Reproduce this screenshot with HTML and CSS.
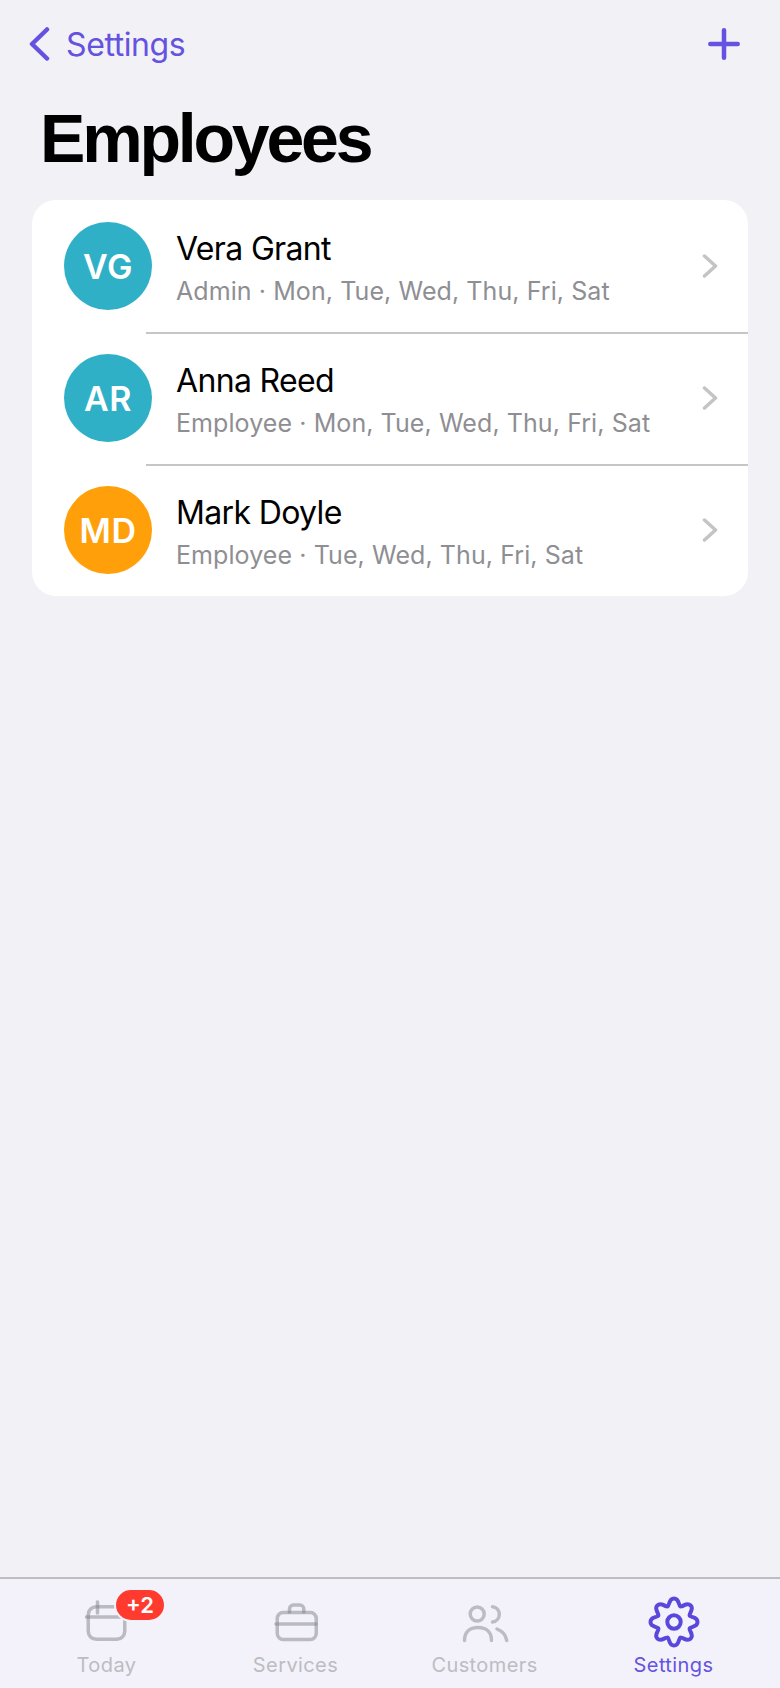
FILE: index.html
```html
<!DOCTYPE html>
<html lang="en">
<head>
    <meta charset="UTF-8">
    <meta name="viewport" content="width=device-width, initial-scale=1.0">
    <title>Employees</title>
    <link rel="stylesheet" href="styles.css">
</head>
<body>
    <div class="screen">
        <header class="navbar">
            <a class="back" href="#">
                <svg class="back-icon" width="22" height="34" viewBox="0 0 22 34"><path d="M19 2.500 4 17l15 14.500"/></svg>
                <span>Settings</span>
            </a>
            <svg class="add-icon" width="32" height="32" viewBox="0 0 32 32"><path d="M16 2.300v27.400M2.300 16h27.400"/></svg>
        </header>

        <h1 class="title">Employees</h1>

        <main class="list">
            <div class="row">
                <div class="avatar teal">VG</div>
                <div class="row-body">
                    <div class="row-text">
                        <div class="name">Vera Grant</div>
                        <div class="meta">Admin · Mon, Tue, Wed, Thu, Fri, Sat</div>
                    </div>
                    <svg class="chevron" width="16" height="24" viewBox="0 0 16 24"><path d="m2.500 2 11 10-11 10"/></svg>
                </div>
            </div>
            <div class="row">
                <div class="avatar teal">AR</div>
                <div class="row-body">
                    <div class="row-text">
                        <div class="name">Anna Reed</div>
                        <div class="meta">Employee · Mon, Tue, Wed, Thu, Fri, Sat</div>
                    </div>
                    <svg class="chevron" width="16" height="24" viewBox="0 0 16 24"><path d="m2.500 2 11 10-11 10"/></svg>
                </div>
            </div>
            <div class="row">
                <div class="avatar orange">MD</div>
                <div class="row-body">
                    <div class="row-text">
                        <div class="name">Mark Doyle</div>
                        <div class="meta">Employee · Tue, Wed, Thu, Fri, Sat</div>
                    </div>
                    <svg class="chevron" width="16" height="24" viewBox="0 0 16 24"><path d="m2.500 2 11 10-11 10"/></svg>
                </div>
            </div>
        </main>

        <nav class="tabbar">
            <a class="tab" href="#">
                <span class="tab-icon">
                    <svg class="line-icon" width="52" height="52" viewBox="0 0 52 52">
                        <rect x="7.250" y="10.750" width="36.500" height="32.500" rx="8"/>
                        <path d="M5.500 21h38"/>
                        <path d="M16.500 6v11"/>
                    </svg>
                    <span class="badge">+2</span>
                </span>
                <span class="tab-label">Today</span>
            </a>
            <a class="tab" href="#">
                <span class="tab-icon">
                    <svg class="line-icon" width="52" height="52" viewBox="0 0 52 52">
                        <rect x="7.250" y="16.500" width="39" height="27" rx="6"/>
                        <path d="M6 28h40"/>
                        <path d="M19.500 16v-3a4 4 0 0 1 4-4h6.300a4 4 0 0 1 4 4v3"/>
                    </svg>
                </span>
                <span class="tab-label">Services</span>
            </a>
            <a class="tab" href="#">
                <span class="tab-icon">
                    <svg class="line-icon solid" width="52" height="52" viewBox="0 0 52 52">
                        <circle cx="18.200" cy="18" r="7"/>
                        <path d="M5.500 44.500c0-8.500 5.500-13 13.500-13s13.500 4.500 13.500 13"/>
                        <path d="M33.500 10.700c4 .5 6.800 3.700 6.800 7.500s-2.800 7.200-6.800 7.800"/>
                        <path d="M38 33c5 2 8.800 6 9.700 11.500"/>
                    </svg>
                </span>
                <span class="tab-label">Customers</span>
            </a>
            <a class="tab active" href="#">
                <span class="tab-icon">
                    <svg class="line-icon solid" width="52" height="52" viewBox="0 0 52 52">
                        <path id="cog" d="M19.490 10.290C21.900 9.300 20.500 2.500 26 2.500S30.100 9.300 32.510 10.290"/>
                        <use href="#cog" transform="rotate(45 26 26)"/>
                        <use href="#cog" transform="rotate(90 26 26)"/>
                        <use href="#cog" transform="rotate(135 26 26)"/>
                        <use href="#cog" transform="rotate(180 26 26)"/>
                        <use href="#cog" transform="rotate(225 26 26)"/>
                        <use href="#cog" transform="rotate(270 26 26)"/>
                        <use href="#cog" transform="rotate(315 26 26)"/>
                        <circle cx="26" cy="26" r="6.700"/>
                    </svg>
                </span>
                <span class="tab-label">Settings</span>
            </a>
        </nav>
    </div>
</body>
</html>
```

FILE: styles.css
```css
* {
    box-sizing: border-box;
}

body {
    margin: 0;
    background-color: #f1f1f6;
    font-family: Inter, "Liberation Sans", sans-serif;
}

a {
    text-decoration: none;
    color: inherit;
}

.screen {
    display: flex;
    flex-direction: column;
    height: 1688px;
}

.navbar {
    display: flex;
    align-items: center;
    justify-content: space-between;
    height: 34px;
    margin-top: 27px;
    padding: 0 40px 0 28px;
    color: #6552e0;
}

.back {
    display: flex;
    align-items: center;
    gap: 16px;
    font-size: 32px;
    letter-spacing: -0.4px;
}

.back-icon,
.add-icon {
    fill: none;
    stroke: #6552e0;
    stroke-linecap: round;
    stroke-linejoin: round;
    stroke-width: 4.5;
}

.title {
    margin: 38px 0 0 40px;
    font-family: "Liberation Sans", Arial, sans-serif;
    font-size: 68px;
    font-weight: 700;
    line-height: 78px;
    letter-spacing: -3.2px;
    color: #000;
}

.list {
    margin: 23px 32px 0;
    padding-top: 2px;
    background-color: #fff;
    border-radius: 24px;
    overflow: hidden;
}

.row {
    display: flex;
    align-items: stretch;
    padding-left: 32px;
}

.avatar {
    flex: none;
    display: flex;
    align-items: center;
    justify-content: center;
    width: 88px;
    height: 88px;
    margin: 20px 0 24px;
    border-radius: 50%;
    color: #fff;
    font-size: 34px;
    font-weight: 600;
    letter-spacing: 0.5px;
}

.row:last-child .avatar {
    margin-bottom: 22px;
}

.teal {
    background-color: #30b0c7;
}

.orange {
    background-color: #ff9f0a;
}

.row-body {
    flex: 1;
    display: flex;
    align-items: center;
    justify-content: space-between;
    margin-left: -6px;
    padding: 0 30px 0 30px;
    border-bottom: 2px solid #c6c6c8;
}

.row:last-child .row-body {
    border-bottom: 0;
}

.row-text {
    margin-top: 2px;
}

.name {
    font-size: 32px;
    line-height: 40px;
    letter-spacing: -0.65px;
    color: #000;
}

.meta {
    margin-top: 6px;
    font-size: 25px;
    line-height: 32px;
    letter-spacing: 0.08px;
    color: #8e8e93;
}

.chevron {
    margin-bottom: 2px;
    fill: none;
    stroke: #c4c4c7;
    stroke-linecap: round;
    stroke-linejoin: round;
    stroke-width: 3.5;
}

.tabbar {
    display: grid;
    grid-template-columns: repeat(4, 1fr);
    margin-top: auto;
    height: 111px;
    padding: 17px 12px 0;
    background-color: #f3f2fa;
    border-top: 2px solid #bdbdc2;
}

.tab {
    display: flex;
    flex-direction: column;
    align-items: center;
    color: #bcbcc2;
}

.tab-icon {
    position: relative;
    display: block;
    width: 52px;
    height: 52px;
}

.line-icon {
    display: block;
    fill: none;
    stroke: rgba(130, 130, 140, 0.5);
    stroke-linecap: round;
    stroke-linejoin: round;
    stroke-width: 3.500;
}

.line-icon.solid {
    stroke: #bcbcc2;
}

.tab.active {
    color: #6552e0;
}

.tab.active .line-icon {
    stroke: #5a48dc;
    stroke-width: 4;
}

.tab-label {
    margin-top: 4px;
    font-size: 20px;
    line-height: 26px;
    letter-spacing: 0.4px;
}

.badge {
    position: absolute;
    top: -6px;
    left: 35.500px;
    width: 48px;
    height: 30px;
    border-radius: 15px;
    background-color: #ff3b30;
    box-shadow: 0 0 0 2px #f3f2fa;
    color: #fff;
    font-size: 22px;
    font-weight: 600;
    line-height: 30px;
    text-align: center;
}
```
